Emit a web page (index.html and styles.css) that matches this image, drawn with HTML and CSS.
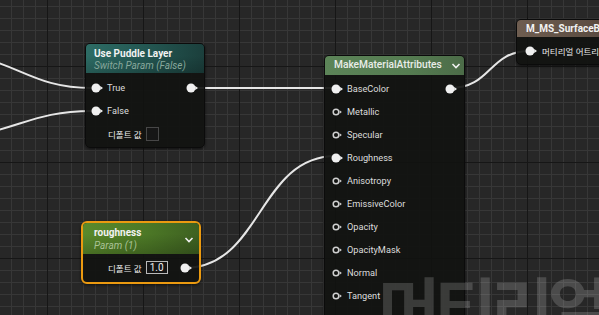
FILE: index.html
```html
<!DOCTYPE html>
<html lang="ko">
<head>
<meta charset="utf-8">
<link rel="stylesheet" href="styles.css">
</head>
<body>
<div class="canvas">
  <svg class="defs" width="0" height="0">
    <defs>
      <symbol id="pin-on" viewBox="0 0 14 12"><circle cx="5" cy="6" r="4.5" fill="#f0f0f0"/><path d="M9.2 3.9 L12 6 L9.2 8.1Z" fill="#f0f0f0"/></symbol>
      <symbol id="pin-off" viewBox="0 0 14 12"><circle cx="5" cy="6" r="2.8" fill="none" stroke="#cfcfcf" stroke-width="1.5"/><path d="M8.6 4.2 L10.8 6 L8.6 7.8Z" fill="#cfcfcf"/></symbol>
      <symbol id="chev" viewBox="0 0 10 8"><path d="M1.5 2 L5 5.5 L8.5 2" fill="none" stroke="#f0f0f0" stroke-width="1.6"/></symbol>
    </defs>
  </svg>

  <svg class="wires" width="599" height="315" viewBox="0 0 599 315">
    <g fill="none" stroke="#e6e6e6" stroke-width="2">
      <path d="M-70 52 C 15 52, 22 88, 92 88"/>
      <path d="M-70 138 C 15 138, 22 111, 92 111"/>
      <path d="M192 88 L 336 88"/>
      <path d="M184 268 C 262 268, 258 156, 336 156"/>
      <path d="M450 88 C 492 88, 488 51, 530 51"/>
    </g>
  </svg>

  <div class="node puddle">
    <div class="head head-teal">
      <div class="title">Use Puddle Layer</div>
      <div class="sub">Switch Param (False)</div>
    </div>
    <div class="body">
      <div class="row">
        <div class="pin-in"><svg class="pin"><use href="#pin-on"/></svg><span>True</span></div>
        <svg class="pin out"><use href="#pin-on"/></svg>
      </div>
      <div class="row">
        <div class="pin-in"><svg class="pin"><use href="#pin-on"/></svg><span>False</span></div>
      </div>
      <div class="row">
        <div class="default"><span class="ko">디폴트 값</span><span class="swatch"></span></div>
      </div>
    </div>
  </div>

  <div class="node mma">
    <div class="head head-green">
      <div class="title">MakeMaterialAttributes</div>
      <svg class="chev"><use href="#chev"/></svg>
    </div>
    <div class="body">
      <div class="row">
        <div class="pin-in"><svg class="pin"><use href="#pin-on"/></svg><span>BaseColor</span></div>
        <svg class="pin out"><use href="#pin-on"/></svg>
      </div>
      <div class="row"><div class="pin-in"><svg class="pin"><use href="#pin-off"/></svg><span>Metallic</span></div></div>
      <div class="row"><div class="pin-in"><svg class="pin"><use href="#pin-off"/></svg><span>Specular</span></div></div>
      <div class="row"><div class="pin-in"><svg class="pin"><use href="#pin-on"/></svg><span>Roughness</span></div></div>
      <div class="row"><div class="pin-in"><svg class="pin"><use href="#pin-off"/></svg><span>Anisotropy</span></div></div>
      <div class="row"><div class="pin-in"><svg class="pin"><use href="#pin-off"/></svg><span>EmissiveColor</span></div></div>
      <div class="row"><div class="pin-in"><svg class="pin"><use href="#pin-off"/></svg><span>Opacity</span></div></div>
      <div class="row"><div class="pin-in"><svg class="pin"><use href="#pin-off"/></svg><span>OpacityMask</span></div></div>
      <div class="row"><div class="pin-in"><svg class="pin"><use href="#pin-off"/></svg><span>Normal</span></div></div>
      <div class="row"><div class="pin-in"><svg class="pin"><use href="#pin-off"/></svg><span>Tangent</span></div></div>
      <div class="row"><div class="pin-in"><svg class="pin"><use href="#pin-off"/></svg><span>WorldPositionOffset</span></div></div>
    </div>
  </div>

  <div class="node surface">
    <div class="head head-brown">
      <div class="title">M_MS_SurfaceBase</div>
    </div>
    <div class="body">
      <div class="row">
        <div class="pin-in"><svg class="pin"><use href="#pin-on"/></svg><span class="ko">머티리얼 어트리뷰트</span></div>
      </div>
    </div>
  </div>

  <div class="node rough">
    <div class="head head-lime">
      <div class="title">roughness</div>
      <div class="sub">Param (1)</div>
      <svg class="chev"><use href="#chev"/></svg>
    </div>
    <div class="body">
      <div class="row">
        <div class="default"><span class="ko">디폴트 값</span><span class="value">1.0</span></div>
        <svg class="pin out"><use href="#pin-on"/></svg>
      </div>
    </div>
  </div>

  <div class="watermark">머티리얼</div>
</div>
</body>
</html>
```

FILE: styles.css
```css
html, body {
  margin: 0;
  padding: 0;
  background: #272727;
}

.canvas {
  position: relative;
  width: 599px;
  height: 315px;
  overflow: hidden;
  font-family: Roboto, "Noto Sans CJK KR", sans-serif;
  color: #dcdcdc;
  background-color: #272727;
  background-image:
    linear-gradient(to right, #161616 0 1px, transparent 1px 100%),
    linear-gradient(to bottom, #161616 0 1px, transparent 1px 100%),
    linear-gradient(to right, #373737 0 1px, transparent 1px 100%),
    linear-gradient(to bottom, #373737 0 1px, transparent 1px 100%);
  background-size: 96px 96px, 96px 96px, 12px 12px, 12px 12px;
  background-position: 47px 0, 0 66px, 11px 0, 0 6px;
}

.defs {
  position: absolute;
  width: 0;
  height: 0;
}

.wires {
  position: absolute;
  left: 0;
  top: 0;
}

.node {
  position: absolute;
  background: rgba(17, 18, 16, 0.92);
  border: 1px solid #0b0b0b;
  border-radius: 5px;
  box-shadow: 0 1px 3px rgba(0, 0, 0, 0.6);
  overflow: hidden;
}

.head {
  position: relative;
  box-sizing: border-box;
}

.title {
  font-size: 10px;
  font-weight: 700;
  color: #f2f2f2;
  white-space: nowrap;
  line-height: 12px;
}

.sub {
  font-size: 10px;
  font-style: italic;
  line-height: 12px;
  white-space: nowrap;
}

.chev {
  position: absolute;
  width: 10px;
  height: 8px;
}

.body {
  display: flex;
  flex-direction: column;
}

.row {
  height: 23px;
  display: flex;
  align-items: center;
  justify-content: space-between;
  font-size: 9.2px;
}

.pin-in {
  display: flex;
  align-items: center;
  gap: 2px;
  white-space: nowrap;
}

.pin {
  width: 14px;
  height: 12px;
  flex: none;
}

.ko {
  font-family: "Noto Sans CJK KR", sans-serif;
  font-size: 8.5px;
  color: #eeeeee;
}

.default {
  display: flex;
  align-items: center;
  gap: 4px;
  white-space: nowrap;
}

/* Use Puddle Layer */
.puddle {
  left: 85px;
  top: 43px;
  width: 118px;
  height: 103px;
}

.head-teal {
  height: 29px;
  padding: 4px 0 0 8px;
  background:
    linear-gradient(to bottom, rgba(0,0,0,0) 40%, rgba(0,0,0,0.18)),
    linear-gradient(to right, #2d6c65, #235550 55%, #1b3f3c);
}

.head-teal .sub {
  color: #87a89c;
}

.puddle .body {
  padding: 3px 4px 0 5px;
}

.puddle .default {
  padding-left: 17px;
}

.swatch {
  width: 11px;
  height: 12px;
  border: 1px solid #474747;
  background: #161616;
}

/* MakeMaterialAttributes */
.mma {
  left: 324px;
  top: 55px;
  width: 139px;
  height: 290px;
}

.head-green {
  height: 19px;
  padding: 3px 0 0 9px;
  background: linear-gradient(to right, #5c8458, #557c51 60%, #4c6c48);
}

.head-green .title {
  font-weight: 500;
  font-size: 10.2px;
  color: #e9ede8;
}

.head-green .chev {
  left: 126px;
  top: 6px;
}

.mma .body {
  padding: 2px 5px 0 6px;
}

/* M_MS_SurfaceBase */
.surface {
  left: 516px;
  top: 19px;
  width: 120px;
  height: 44px;
}

.head-brown {
  height: 17px;
  padding: 3px 0 0 9px;
  background: linear-gradient(to right, #6e5d50, #5d4e43 60%, #4e4139);
}

.surface .body {
  padding: 2px 0 0 8px;
}

.surface .pin-in {
  gap: 3px;
}

/* roughness */
.rough {
  left: 81px;
  top: 221px;
  width: 116px;
  height: 59px;
  border: 2px solid #eb9a10;
  border-radius: 6px;
}

.head-lime {
  height: 31px;
  padding: 4px 0 0 11px;
  background:
    linear-gradient(to bottom, rgba(0,0,0,0) 35%, rgba(0,0,0,0.2)),
    linear-gradient(to right, #5a8a2c, #4c7826 55%, #3e6121);
}

.head-lime .sub {
  margin-top: 1px;
  color: #a9c295;
}

.head-lime .chev {
  left: 101px;
  top: 13px;
}

.rough .body {
  padding: 2px 5px 0 25px;
}

.value {
  box-sizing: border-box;
  width: 22px;
  height: 13px;
  border: 1px solid #b9b9b9;
  background: #141414;
  font-size: 10px;
  line-height: 11px;
  text-align: center;
  color: #f0f0f0;
}

/* watermark overlay */
.watermark {
  position: absolute;
  left: 378px;
  top: 272px;
  font-family: "Noto Sans CJK KR", sans-serif;
  font-weight: 700;
  font-size: 68px;
  letter-spacing: -6px;
  line-height: 1;
  color: rgba(255, 255, 255, 0.17);
  white-space: nowrap;
  pointer-events: none;
}
```
